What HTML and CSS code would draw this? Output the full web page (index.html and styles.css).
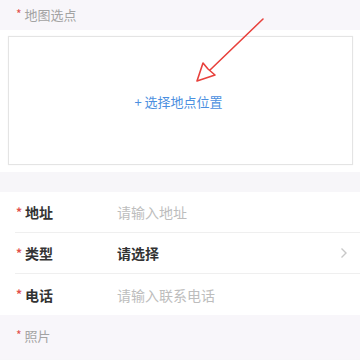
FILE: index.html
```html
<!DOCTYPE html>
<html lang="zh">
<head>
<meta charset="utf-8">
<link rel="stylesheet" href="styles.css">
</head>
<body>
<div class="page">
  <div class="section-title"><span class="req">*</span>地图选点</div>
  <div class="map-card">
    <div class="map-box">
      <span class="pick">+ 选择地点位置</span>
    </div>
  </div>
  <div class="band"></div>
  <div class="form">
    <div class="row">
      <div class="label"><span class="req">*</span>地址</div>
      <div class="value placeholder">请输入地址</div>
    </div>
    <div class="row">
      <div class="label"><span class="req">*</span>类型</div>
      <div class="value strong">请选择</div>
      <svg class="chev" width="8" height="12" viewBox="0 0 8 12"><path d="M1.5 1.5 L6 6 L1.5 10.5" fill="none" stroke="#c8c8c8" stroke-width="1.4"/></svg>
    </div>
    <div class="row last">
      <div class="label"><span class="req">*</span>电话</div>
      <div class="value placeholder">请输入联系电话</div>
    </div>
  </div>
  <div class="section-title photo"><span class="req">*</span>照片</div>
  <svg class="arrow" width="360" height="120" viewBox="0 0 360 120">
    <g fill="none" stroke="#e8413c" stroke-width="1.6" stroke-linejoin="round" stroke-linecap="round">
      <path d="M263 19 L210 70"/>
      <path d="M197 81 L203 63 L208 69 L215 75 Z"/>
    </g>
  </svg>
</div>
</body>
</html>
```
FILE: styles.css
```css
* { box-sizing: border-box; margin: 0; padding: 0; }
html, body { width: 360px; height: 360px; overflow: hidden; }
body {
  background: #f7f6f9;
  font-family: "Noto Sans CJK SC", "Noto Sans", sans-serif;
}
.page { position: relative; width: 360px; }
.section-title {
  height: 30px;
  display: flex;
  align-items: center;
  padding-left: 16px;
  padding-bottom: 1px;
  font-size: 13px;
  color: #a3a3a3;
  background: #f8f6fa;
}
.req {
  color: #e2504c;
  font-size: 12px;
  margin-right: 3px;
  position: relative;
  top: -1px;
}
.map-card {
  background: #ffffff;
  padding: 6px 7px 7px 8px;
}
.map-box {
  height: 129px;
  border: 1px solid #e4e4e4;
  box-shadow: 0 0 1px rgba(0,0,0,0.08);
  display: flex;
  align-items: center;
  justify-content: center;
  padding-right: 4px;
}
.pick {
  color: #4b8fe0;
  font-size: 13px;
  margin-top: 1px;
}
.band { height: 20px; background: #f7f6f9; }
.form { background: #ffffff; padding-left: 15px; }
.row {
  height: 41px;
  display: flex;
  align-items: center;
  border-bottom: 1px solid #efefef;
  padding-right: 12px;
}
.row.last { border-bottom: none; }
.label {
  width: 102px;
  font-size: 14px;
  font-weight: 700;
  color: #333333;
  display: flex;
  align-items: center;
}
.label .req { margin-left: 1px; }
.value { flex: 1; font-size: 14px; }
.placeholder { color: #bdbdbd; }
.strong { color: #333333; font-weight: 700; }
.chev { flex: none; }
.section-title.photo { height: 44px; padding-bottom: 4px; }
.arrow {
  position: absolute;
  left: 0;
  top: 0;
  pointer-events: none;
}
```
